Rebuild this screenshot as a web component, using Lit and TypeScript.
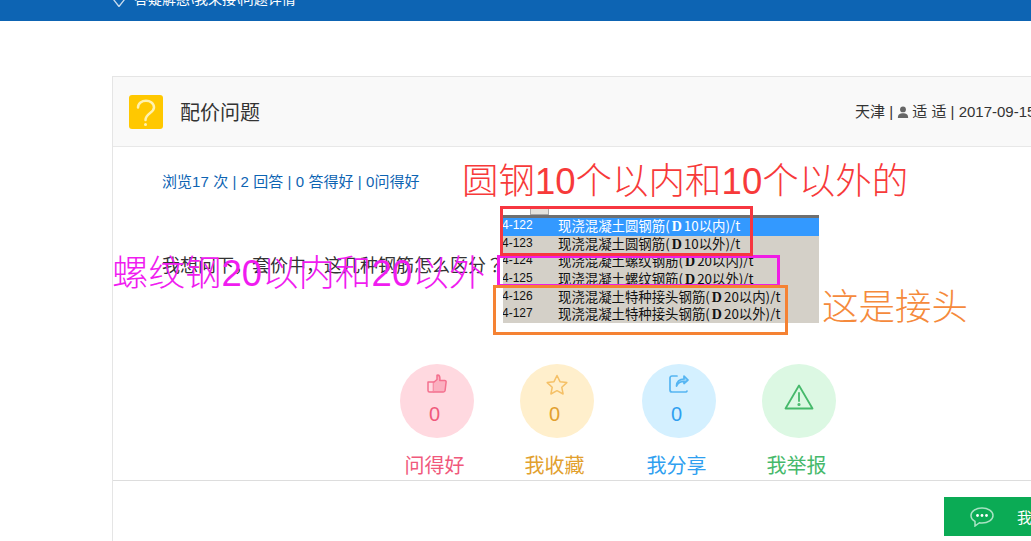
import { LitElement, html, css } from "lit";
import { customElement } from "lit/decorators.js";

const rows = [
  { code: "4-122", name: "现浇混凝土圆钢筋", d: "10以内", sel: true },
  { code: "4-123", name: "现浇混凝土圆钢筋", d: "10以外", sel: false },
  { code: "4-124", name: "现浇混凝土螺纹钢筋", d: "20以内", sel: false },
  { code: "4-125", name: "现浇混凝土螺纹钢筋", d: "20以外", sel: false },
  { code: "4-126", name: "现浇混凝土特种接头钢筋", d: "20以内", sel: false },
  { code: "4-127", name: "现浇混凝土特种接头钢筋", d: "20以外", sel: false },
];

@customElement("app-root")
export class AppRoot extends LitElement {
  static styles = css`
    :host {
      display: block;
      position: relative;
      width: 1031px;
      height: 541px;
      overflow: hidden;
      background: #fff;
      font-family: "Liberation Sans", "Noto Sans CJK SC", sans-serif;
      color: #333;
    }
    .topbar {
      height: 21px;
      background: #0d64b3;
      box-sizing: border-box;
      padding: 0 0 15px 112px;
      display: flex;
      align-items: flex-end;
      gap: 8px;
      color: #fff;
      font-size: 14px;
      line-height: 14px;
    }
    .topbar svg { flex: none; margin-bottom: -1px; }
    .card {
      margin: 55px 0 0 112px;
      width: 1100px;
      height: 600px;
      border: 1px solid #e5e5e5;
      box-sizing: border-box;
    }
    .head {
      height: 70px;
      box-sizing: border-box;
      background: #f9f9f9;
      border-bottom: 1px solid #e8e8e8;
      display: flex;
      align-items: center;
      padding-left: 16px;
    }
    .qicon {
      width: 34px;
      height: 34px;
      flex: none;
      border-radius: 3px;
      background: #ffc800;
    }
    .qicon svg { display: block; }
    .title {
      font-size: 20px;
      margin-left: 17px;
      width: 675px;
      flex: none;
      color: #333;
    }
    .meta {
      flex: none;
      display: flex;
      align-items: center;
      font-size: 15px;
      white-space: pre;
      color: #333;
      margin-bottom: 2px;
    }
    .meta svg { margin: 2px 3px 0 0; }
    .stats {
      margin: 25px 0 0 49px;
      font-size: 15px;
      line-height: 20px;
      letter-spacing: 0.06px;
      color: #0d64b3;
    }
    .question {
      margin: 16px 0 0 49px;
      display: flex;
      align-items: center;
      height: 115px;
    }
    .qtext {
      flex: none;
      width: 341px;
      font-size: 18px;
      color: #333;
      margin-bottom: 3px;
      white-space: nowrap;
    }
    .qmark { font-family: "Noto Sans CJK TC", sans-serif; }
    .shot {
      flex: none;
      width: 316px;
      height: 115px;
      overflow: hidden;
      background: #d4d0c8;
      font-family: "Noto Sans CJK SC", sans-serif;
      font-size: 13.4px;
      color: #111;
    }
    .shot-top {
      height: 7px;
      background: #fff;
      padding-left: 27px;
    }
    .tab {
      width: 19px;
      height: 7px;
      box-sizing: border-box;
      background: #e4e2dc;
      border: 1px solid #a8a8a8;
      border-top: none;
    }
    .band { height: 3px; background: #6f6f6f; }
    .row {
      height: 17.7px;
      line-height: 15.7px;
      display: flex;
      white-space: nowrap;
    }
    .row.sel { background: #3399ff; color: #fff; }
    .code {
      width: 55px;
      flex: none;
      font-family: "Liberation Sans", sans-serif;
      font-size: 12px;
      text-indent: -1px;
    }
    .row b { font-family: "Liberation Serif", serif; font-size: 14px; margin: 0 2px; }
    .actions {
      margin: 41px 0 0 287px;
      display: flex;
      gap: 46px;
    }
    .act { width: 74px; display: flex; flex-direction: column; align-items: center; }
    .act.share { margin-left: 2px; }
    .circle {
      width: 74px;
      height: 74px;
      border-radius: 50%;
      display: flex;
      flex-direction: column;
      align-items: center;
      box-sizing: border-box;
      padding-top: 10px;
      font-size: 20px;
      line-height: 26px;
    }
    .circle.solo { padding-top: 20px; }
    .circle svg { display: block; margin-bottom: 8px; }
    .circle svg.tall { margin-bottom: 5px; }
    .num { margin-right: 5px; }
    .label {
      margin: 14px 5px 0 0;
      font-size: 20px;
      line-height: 28px;
      white-space: nowrap;
    }
    .pink { color: #f0597c; }
    .pink .circle { background: #ffd9e0; }
    .gold { color: #e2a02e; }
    .gold .circle { background: #ffefcc; }
    .blue { color: #2f9ff0; }
    .blue .circle { background: #d4f0ff; }
    .green { color: #46b96b; }
    .green .circle { background: #dcf8e3; }
    .rule { border-top: 1px solid #ddd; }
    .note {
      position: absolute;
      font-family: "Liberation Sans", "Noto Sans CJK SC", sans-serif;
      font-size: 36.5px;
      line-height: 44px;
      white-space: nowrap;
      font-weight: 300;
    }
    .n-red { left: 462px; top: 160px; color: #f73a3a; }
    .n-pink { left: 112px; top: 252px; color: #f01cf0; }
    .n-orange { left: 822px; top: 286px; color: #f58a3c; }
    .box { position: absolute; box-sizing: border-box; border-style: solid; border-width: 3px; }
    .b-red { left: 500px; top: 206px; width: 253px; height: 50px; border-color: #f73640; }
    .b-pink { left: 497px; top: 255px; width: 283px; height: 32px; border-color: #f01ce6; }
    .b-orange { left: 493px; top: 285px; width: 295px; height: 50px; border-color: #f58233; }
    .chat {
      position: absolute;
      left: 944px;
      top: 497px;
      width: 140px;
      height: 39px;
      background: #0bab55;
      color: #fff;
      display: flex;
      align-items: center;
      padding-left: 26px;
      gap: 23px;
      box-sizing: border-box;
      font-size: 15px;
      white-space: nowrap;
    }
    .chat svg { flex: none; }
  `;

  render() {
    return html`
      <div class="topbar">
        <svg width="14" height="14" viewBox="0 0 14 14" fill="none" stroke="#c9dcee" stroke-width="1.3"><path d="M7 13.500 1.500 6.500 7 0l5.500 6.500z"/></svg>
        <span>答疑解惑\\我来接\\问题详情</span>
      </div>
      <div class="card">
        <div class="head">
          <div class="qicon">
            <svg width="34" height="34" viewBox="0 0 34 34" fill="none" stroke="#fff2b0" stroke-width="2.500" stroke-linecap="round">
              <path d="M9 12.500C9 3.500 25 3.500 25 12.500 25 18 16.500 18 16.500 25"/>
              <circle cx="16.500" cy="29.500" r="1.500" fill="#fff2b0" stroke="none"/>
            </svg>
          </div>
          <div class="title">配价问题</div>
          <div class="meta">天津 | <svg width="12" height="14" viewBox="0 0 14 14" fill="#666"><circle cx="7" cy="4" r="3.400"/><path d="M1 14c0-4.500 2.500-5.500 6-5.500s6 1 6 5.500z"/></svg><span>适 适 | 2017-09-15</span></div>
        </div>
        <div class="stats">浏览17 次 | 2 回答 | 0 答得好 | 0问得好</div>
        <div class="question">
          <div class="qtext">我想问下，套价中，这几种钢筋怎么区分<span class="qmark">？</span></div>
          <div class="shot">
            <div class="shot-top"><div class="tab"></div></div>
            <div class="band"></div>
            ${rows.map(
              (r) => html`<div class="row ${r.sel ? "sel" : ""}">
                <span class="code">${r.code}</span>
                <span>${r.name}(<b>D</b>${r.d})/t</span>
              </div>`
            )}
          </div>
        </div>
        <div class="actions">
          <div class="act pink">
            <div class="circle">
              <svg width="20" height="19" viewBox="0 0 20 19" fill="none" stroke="#f4708e" stroke-width="1.500" stroke-linejoin="round"><path d="M1 8h5.500v10H2.500A1.500 1.500 0 0 1 1 16.500z"/><path d="M6.500 8.500 10 5.500V1.200c2.500-.5 3.200 1.300 2.800 5.300h5c.9 0 1.400.6 1.300 1.500l-1 8.500c-.1 1-.8 1.500-1.800 1.500H6.500" fill="#fbb0c0"/></svg>
              <span class="num">0</span>
            </div>
            <div class="label">问得好</div>
          </div>
          <div class="act gold">
            <div class="circle">
              <svg class="tall" width="22" height="22" viewBox="0 0 22 22" fill="none" stroke="#f5c066" stroke-width="1.500" stroke-linejoin="round"><path d="M11 1.500l3 6.200 6.800.9-5 4.700 1.300 6.700-6.100-3.300-6.100 3.300 1.300-6.700-5-4.700 6.800-.9z"/></svg>
              <span class="num">0</span>
            </div>
            <div class="label">我收藏</div>
          </div>
          <div class="act blue share">
            <div class="circle">
              <svg width="20" height="19" viewBox="0 0 20 19" fill="none" stroke="#55b5f2" stroke-width="1.700" stroke-linejoin="round" stroke-linecap="round"><path d="M8 2H3A2 2 0 0 0 1 4v12a2 2 0 0 0 2 2h14a1.500 1.500 0 0 0 1-1"/><path d="M7.500 12C7.500 7.500 10.500 5 15 5V2l4 4-4 3.500V7.500c-3.500 0-6 1.500-7.500 4.500z" fill="#9ad4f7"/></svg>
              <span class="num">0</span>
            </div>
            <div class="label">我分享</div>
          </div>
          <div class="act green">
            <div class="circle solo">
              <svg width="30" height="26" viewBox="0 0 30 26" fill="none" stroke="#46b96b" stroke-width="1.800" stroke-linejoin="round" stroke-linecap="round"><path d="M15 1.500 1.500 24.500h27z"/><path d="M15 9v8"/><circle cx="15" cy="20.500" r=".7"/></svg>
            </div>
            <div class="label">我举报</div>
          </div>
        </div>
        <div class="rule"></div>
      </div>
      <div class="box b-pink"></div>
      <div class="box b-orange"></div>
      <div class="box b-red"></div>
      <div class="note n-red">圆钢10个以内和10个以外的</div>
      <div class="note n-pink">螺纹钢20以内和20以外</div>
      <div class="note n-orange">这是接头</div>
      <div class="chat">
        <svg width="24" height="20" viewBox="0 0 24 20" fill="none" stroke="#a9e3c3" stroke-width="1.500"><path d="M12 1C6 1 1 4 1 8.500c0 2.500 1.500 4.500 4 5.800L5 19l4.500-3.300c.8.100 1.600.2 2.500.2 6 0 11-3 11-7.400S18 1 12 1z"/><g fill="#fff" stroke="none"><circle cx="7.500" cy="8.500" r="1.400"/><circle cx="12" cy="8.500" r="1.400"/><circle cx="16.500" cy="8.500" r="1.400"/></g></svg>
        <span>我要回答</span>
      </div>
    `;
  }
}
